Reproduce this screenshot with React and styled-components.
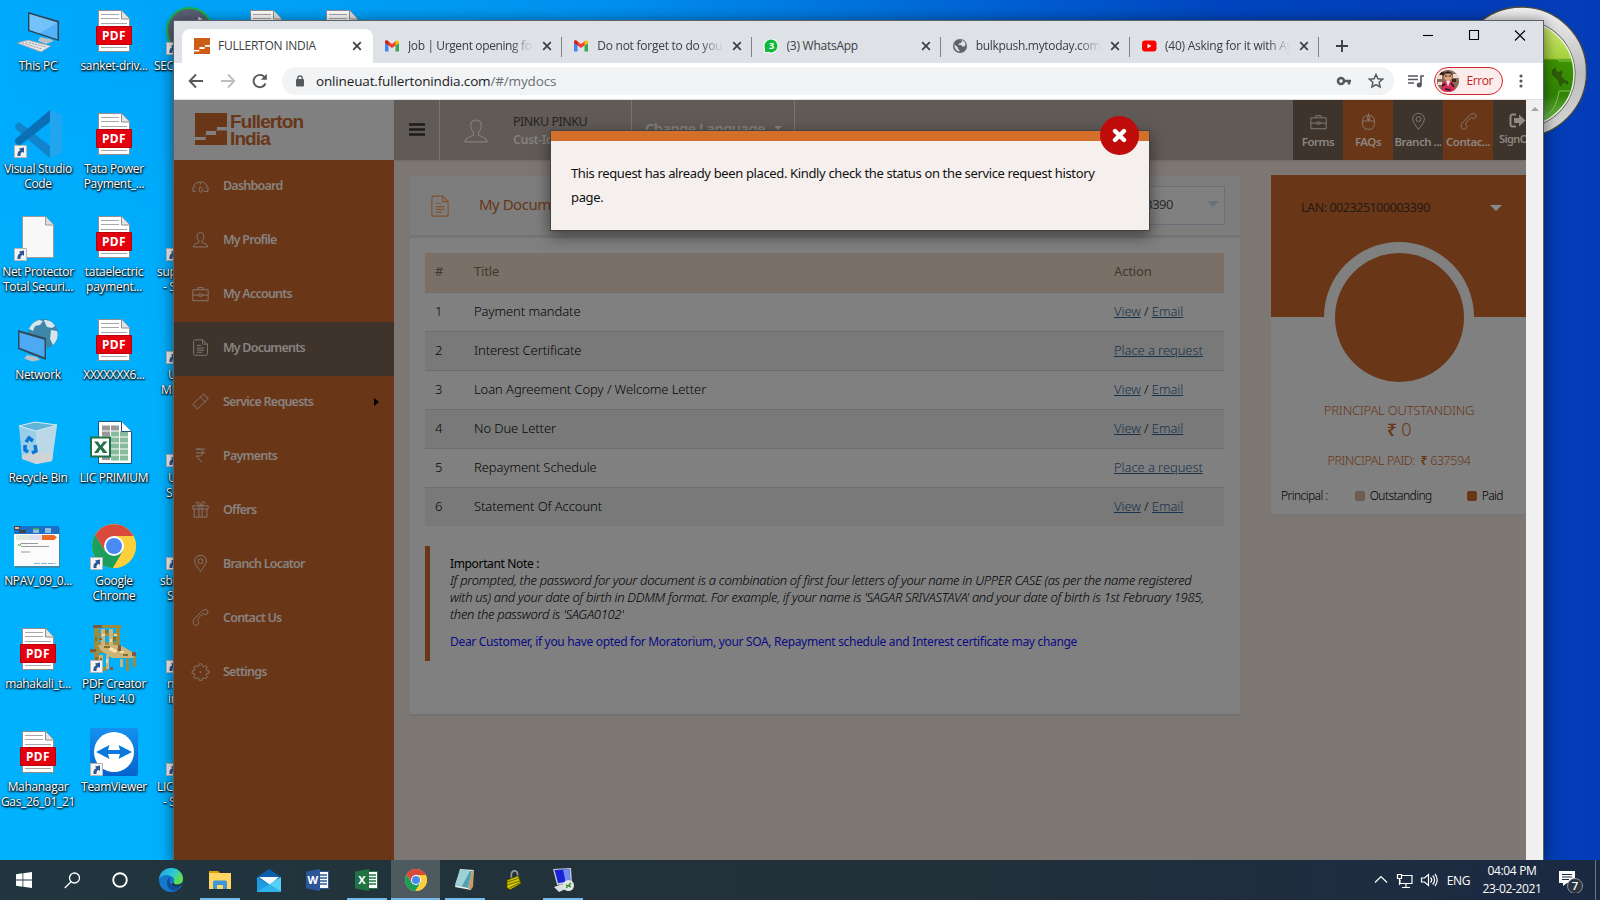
import React from "react";
import styled, { createGlobalStyle, css } from "styled-components";

const GlobalStyle = createGlobalStyle`
  * { box-sizing: border-box; }
  html, body { margin: 0; padding: 0; overflow: hidden; }
  body { font-family: "Open Sans", "Noto Sans", sans-serif; font-size: 12px; color: #000; }
`;

const ui = `"Open Sans", "Noto Sans", sans-serif`;
const site = `"Noto Sans", "Open Sans", sans-serif`;

/* ---------- desktop ---------- */
const Desktop = styled.div`
  position: relative;
  display: flex;
  flex-direction: column;
  width: 1600px;
  height: 900px;
  overflow: hidden;
  background: linear-gradient(90deg, #00a9fc 0%, #00a2f8 18%, #0092ef 37%, #007ae0 50%, #0062d3 62%, #0046c0 76%, #033fba 88%, #033cb6 100%);
`;
const DesktopArea = styled.div`
  flex: 1;
  display: grid;
  grid-template-columns: repeat(5, 76px);
  grid-template-rows: repeat(8, 103px);
  grid-auto-flow: column;
  padding-top: 7px;
  background: linear-gradient(180deg, transparent 0, rgba(0, 182, 255, 0.6) 45%, rgba(0, 182, 255, 0.7) 100%) no-repeat 0 0 / 174px 100%;
`;
const Shortcut = styled.div`
  display: flex;
  flex-direction: column;
  align-items: ${(p) => (p.$indent ? "flex-start" : "center")};
  min-width: 0;
`;
const IconBox = styled.div`
  position: relative;
  width: 48px;
  height: 48px;
  margin: 0 14px;
  svg { display: block; }
`;
const ShortcutArrow = styled.svg`
  position: absolute;
  left: 0;
  bottom: 0;
`;
const Label = styled.div`
  width: 76px;
  margin-top: 3px;
  font: 12px/15px ${ui};
  letter-spacing: -0.32px;
  color: #fff;
  text-align: ${(p) => (p.$left ? "left" : "center")};
  white-space: pre;
  text-shadow: 0 1px 2px #000, 1px 1px 2px rgba(0, 0, 0, 0.9), 0 0 2px rgba(0, 0, 0, 0.5);
`;
const LabelLine = styled.div`
  padding-left: ${(p) => p.$pad || 0}px;
`;
const Gadget = styled.svg`
  position: absolute;
  left: 1454px;
  top: 5px;
`;

/* ---------- browser window ---------- */
const Window = styled.div`
  position: absolute;
  left: 173px;
  top: 20px;
  width: 1371px;
  height: 841px;
  display: flex;
  flex-direction: column;
  border: 1px solid #5b6168;
  border-bottom: 0;
  background: #fff;
  box-shadow: 0 2px 14px rgba(0, 0, 0, 0.55);
`;
const TabStrip = styled.div`
  display: flex;
  height: 42px;
  flex: none;
  padding: 8px 0 0 8px;
  background: #dee1e6;
`;
const Tab = styled.div`
  display: flex;
  align-items: center;
  width: ${(p) => (p.$active ? 191 : 189.25)}px;
  height: 34px;
  padding: 0 ${(p) => (p.$active ? 11 : 10)}px 0 ${(p) => (p.$active ? 12 : 11)}px;
  border-radius: 8px 8px 0 0;
  background: ${(p) => (p.$active ? "#fff" : "transparent")};
  position: relative;
  ${(p) =>
    !p.$active &&
    css`
      &::after {
        content: "";
        position: absolute;
        right: 0;
        top: 8px;
        width: 1px;
        height: 20px;
        background: #808489;
      }
    `}
`;
const Favicon = styled.div`
  width: 16px;
  height: 16px;
  flex: none;
  margin-right: 8px;
  svg { display: block; }
`;
const TabTitle = styled.div`
  flex: 1;
  min-width: 0;
  overflow: hidden;
  white-space: nowrap;
  font: 12px/18px ${ui};
  letter-spacing: ${(p) => p.$ls ?? -0.25}px;
  color: #3c4043;
  ${(p) => p.$fade && css`mask-image: linear-gradient(90deg, #000 82%, transparent 100%);`}
`;
const TabClose = styled.svg`
  flex: none;
  margin-left: 9px;
`;
const NewTab = styled.svg`
  margin: 10px 0 0 16px;
`;
const Caption = styled.div`
  margin-left: auto;
  margin-top: -1px;
  display: flex;
  gap: 30px;
  padding-right: 16px;
`;
const Toolbar = styled.div`
  display: flex;
  align-items: center;
  height: 37px;
  flex: none;
  padding: 0 14px 0 13px;
  border-bottom: 1px solid #dcdee0;
`;
const NavIcon = styled.svg`
  flex: none;
  margin-right: 14px;
`;
const Omnibox = styled.div`
  display: flex;
  align-items: center;
  width: 1112px;
  height: 28px;
  margin-left: -1px;
  padding: 0 10px 0 14px;
  border-radius: 14px;
  background: #f1f3f4;
  font: 13.5px/20px ${ui};
  letter-spacing: -0.15px;
  color: #202124;
  span { color: #6b6f73; }
  svg { flex: none; }
`;
const Url = styled.div`
  margin-left: 12px;
  flex: 1;
`;
const OmniActions = styled.div`
  display: flex;
  gap: 16px;
  align-items: center;
`;
const MediaIcon = styled.svg`
  flex: none;
  margin-left: 13px;
`;
const ProfileChip = styled.div`
  display: flex;
  align-items: center;
  width: 69px;
  height: 28px;
  margin: 0 16px 0 9px;
  padding-left: 2px;
  border: 1px solid #d2262a;
  border-radius: 14px;
  background: #fceceb;
  color: #c5221f;
  font: 12px/16px ${ui};
  letter-spacing: -0.4px;
  svg { margin-right: 7.5px; flex: none; }
`;

/* ---------- web page ---------- */
const Page = styled.div`
  flex: 1;
  display: flex;
  min-height: 0;
  font-family: ${site};
`;
const Scrollbar = styled.div`
  width: 17px;
  background: #f0f0f0;
  display: flex;
  justify-content: center;
  padding-top: 7px;
`;
const ScrollUp = styled.i`
  width: 0;
  height: 0;
  border: 4px solid transparent;
  border-bottom-color: #a3a3a3;
  border-top: 0;
`;
const Sidebar = styled.div`
  width: 220px;
  flex: none;
  background: #693617;
`;
const Brand = styled.div`
  display: flex;
  align-items: center;
  height: 60px;
  padding: 0 0 3px 21px;
  background: #808080;
  color: #693617;
`;
const BrandName = styled.div`
  margin: 3px 0 0 3px;
  font: bold 19px/17.5px "Liberation Sans", sans-serif;
  letter-spacing: -0.9px;
`;
const MenuItem = styled.div`
  display: flex;
  align-items: center;
  height: 54px;
  padding-left: 18px;
  background: ${(p) => (p.$active ? "#3e342b" : "transparent")};
  color: #888380;
  font: 600 12.5px/20px ${site};
  letter-spacing: -0.78px;
  svg { margin: -3px 14px 0 0; color: #837a74; }
  span { flex: 1; padding-bottom: 2px; }
`;
const SubArrow = styled.i`
  width: 0;
  height: 0;
  margin: -3px 15px 0 0;
  border: 4px solid transparent;
  border-left: 5px solid #000;
  border-right: 0;
`;
const Main = styled.div`
  width: 1132px;
  flex: none;
  overflow: hidden;
  background: #7d7773;
`;
const TopBar = styled.div`
  display: flex;
  height: 60px;
  background: #605b56;
  box-shadow: 0 1px 2px rgba(0, 0, 0, 0.12);
`;
const TopCell = styled.div`
  display: flex;
  align-items: center;
  width: ${(p) => p.$w}px;
  flex: none;
  padding-left: ${(p) => p.$pad}px;
  border-right: 1px solid #7b7672;
`;
const UserName = styled.div`
  margin: 1px 0 0 24px;
  font: 12.5px/18px ${site};
  letter-spacing: -0.5px;
  color: #262322;
  white-space: nowrap;
  b { display: block; font-size: 12.5px; font-weight: 600; color: #85807d; }
`;
const Language = styled.div`
  display: flex;
  align-items: center;
  gap: 9px;
  padding-bottom: 5px;
  font: 600 14.5px/20px ${site};
  letter-spacing: -0.5px;
  color: #85807d;
  white-space: nowrap;
`;
const QuickLinks = styled.div`
  display: flex;
  margin-left: auto;
  width: 233px;
  overflow: hidden;
`;
const QuickLink = styled.div`
  flex: none;
  width: 50px;
  height: 60px;
  padding: ${(p) => (p.$lift ? 12 : 13)}px 0 0 ${(p) => (p.$lift ? 6 : 0)}px;
  background: ${(p) => (p.$orange ? "#693617" : "#3e342b")};
  color: #8b8683;
  text-align: ${(p) => (p.$lift ? "left" : "center")};
  font: 600 ${(p) => (p.$lift ? 11 : 11.5)}px/14px ${site};
  letter-spacing: ${(p) => (p.$lift ? -0.6 : -0.5)}px;
  white-space: nowrap;
  svg { display: block; margin: 0 auto 5px; color: #857c76; ${(p) => p.$lift && css`margin: 1px 0 4px 10px; color: #8e8b88;`} }
`;
const Content = styled.div`
  display: flex;
  align-items: flex-start;
  padding: 15px 0 0 15px;
`;
const Card = styled.div`
  width: 832px;
  height: 541px;
  flex: none;
  border: 1px solid #787878;
  border-bottom: 2px solid #75716f;
  background: #808080;
`;
const CardHead = styled.div`
  display: flex;
  align-items: center;
  height: 62px;
  padding: 0 15px 1px 20px;
  background: #7d7d7d;
  border-bottom: 3px solid #757575;
  color: #693617;
  svg { margin-right: 29px; margin-top: 1px; }
`;
const CardTitle = styled.div`
  padding-bottom: 2px;
  font: 15px/20px ${site};
  letter-spacing: -0.5px;
`;
const AccountSelect = styled.div`
  margin-left: auto;
  display: flex;
  align-items: center;
  justify-content: flex-end;
  width: 190px;
  height: 39px;
  padding: 0 5px 2px 0;
  border: 1px solid #687079;
  background: #808080;
  color: #2d2d2d;
  font: 13px/20px ${site};
  letter-spacing: -0.5px;
  white-space: nowrap;
`;
const Caret = styled.i`
  width: 0;
  height: 0;
  margin-left: ${(p) => p.$gap || 0}px;
  border: ${(p) => p.$s || 6}px solid transparent;
  border-top-color: ${(p) => p.$c || "#6a7177"};
  border-bottom: 0;
`;
const Table = styled.div`
  margin: 15px 16px 0 15px;
`;
const Row = styled.div`
  display: grid;
  grid-template-columns: 39px 640px 1fr;
  align-items: center;
  height: ${(p) => (p.$head ? 40 : p.$last ? 38 : 39)}px;
  padding: 0 0 ${(p) => (p.$head ? 3 : 2)}px 10px;
  border-bottom: ${(p) => (p.$last ? 0 : 1)}px solid #6d6d6d;
  background: ${(p) => (p.$head ? "#7a7068" : p.$odd ? "#797979" : "transparent")};
  color: ${(p) => (p.$head ? "#42382e" : "#050505")};
  font: ${(p) => (p.$head ? 400 : 300)} 13px/20px ${site};
  letter-spacing: ${(p) => (p.$head ? -0.15 : -0.08)}px;
`;
const Link = styled.a`
  color: #18334c;
  text-decoration: underline;
`;
const Note = styled.div`
  height: 115px;
  margin: 20px 15px 0;
  padding: 9px 0 0 20px;
  border-left: 5px solid #693617;
  font: 400 12px/17px ${site};
  letter-spacing: -0.35px;
  color: #000;
  white-space: nowrap;
  em { display: block; font-size: 13px; font-weight: 300; letter-spacing: -0.31px; }
  p { margin: 10px 0 0; color: #0b0b85; letter-spacing: -0.32px; }
`;
const Summary = styled.div`
  width: 256px;
  height: 340px;
  margin-left: 30px;
  background: #808080;
  border-bottom: 1px solid #757170;
  color: #693617;
  text-align: center;
  font-family: ${site};
`;
const SummaryTop = styled.div`
  display: flex;
  flex-direction: column;
  height: 142px;
  background: #693617;
`;
const Lan = styled.div`
  display: flex;
  align-items: center;
  padding: 23px 24px 0 30px;
  justify-content: space-between;
  color: #241a14;
  font: 12.5px/20px ${site};
  letter-spacing: -0.45px;
`;
const Gauge = styled.div`
  flex: none;
  width: 150px;
  height: 75px;
  margin: 24px auto 0 53px;
  padding: 10.5px;
  border-radius: 75px 75px 0 0;
  background: #808080;
`;
const GaugeDisc = styled.div`
  width: 129px;
  height: 129px;
  border-radius: 50%;
  background: #693617;
`;
const Amount = styled.div`
  margin-top: ${(p) => p.$top || 0}px;
  padding-left: 1px;
  font: 300 ${(p) => p.$size}px/20px ${site};
  letter-spacing: ${(p) => p.$ls}px;
  b { font-weight: 600; }
`;
const Legend = styled.div`
  display: flex;
  align-items: center;
  margin-top: 15px;
  padding-left: 10px;
  color: #000;
  font: 300 12px/20px ${site};
  letter-spacing: -0.55px;
`;
const Swatch = styled.i`
  width: 10px;
  height: 10px;
  margin: 0 5px 0 ${(p) => p.$gap}px;
  border-radius: 2px;
  background: ${(p) => p.$c};
`;

/* ---------- dialog ---------- */
const Dialog = styled.div`
  position: absolute;
  left: 376px;
  top: 109px;
  width: 600px;
  height: 101px;
  padding: 30px 0 0 20px;
  border: 1px solid #454443;
  background: linear-gradient(#d36e2b 10px, #f5f0ed 10px);
  box-shadow: 0 5px 14px rgba(0, 0, 0, 0.5);
  font: 13px/24px ${site};
  letter-spacing: -0.36px;
  color: #111;
`;
const DialogClose = styled.div`
  position: absolute;
  right: 10.5px;
  top: -15px;
  width: 39px;
  height: 39px;
  display: grid;
  place-items: center;
  border-radius: 50%;
  background: #c00b0b;
`;

/* ---------- taskbar ---------- */
const Taskbar = styled.div`
  position: relative;
  z-index: 2;
  display: flex;
  height: 40px;
  flex: none;
  background: linear-gradient(90deg, #213640 0%, #22323a 30%, #22303a 60%, #1d2c40 88%, #1a2942 100%);
  color: #fff;
  font: 12px/19px ${ui};
`;
const TaskButton = styled.div`
  display: grid;
  place-items: center;
  width: ${(p) => p.$w || 49}px;
  margin-left: ${(p) => p.$gap || 0}px;
  background: ${(p) => (p.$active ? "#4d5a60" : "transparent")};
  ${(p) => p.$open && css`background-image: linear-gradient(#76b9ed, #76b9ed); background-size: ${p.$active ? 49 : 40}px 2px; background-repeat: no-repeat; background-position: center bottom;`}
`;
const Tray = styled.div`
  display: flex;
  align-items: center;
  margin-left: auto;
  padding-right: 10px;
`;
const Lang = styled.span`
  margin-left: 9px;
  letter-spacing: -0.4px;
`;
const Clock = styled.div`
  width: 62px;
  margin: 0 16px 0 11px;
  text-align: center;
  letter-spacing: -0.35px;
  line-height: 18px;
  white-space: nowrap;
`;
const ShowDesktop = styled.div`
  width: 5px;
  border-left: 1px solid #6d7784;
`;

/* ---------- drawings ---------- */
const Arrow = () => (
  <ShortcutArrow width="13" height="13" viewBox="0 0 13 13">
    <path d="M.5.5h12v12H.5z" fill="#f4f4f4" stroke="#b5b5b5" />
    <path d="M3.500 11c-.3-3 .6-5 2.800-5.800L5 3.500 10 2.500V8L8.600 6.800C7 7.500 6.300 9 6.500 11z" fill="#2b5797" />
  </ShortcutArrow>
);
const Pdf = () => (
  <svg width="48" height="48" viewBox="0 0 48 48">
    <path d="M8.500 3.500h23l8 8v33h-31z" fill="#fff" stroke="#8f8f8f" />
    <path d="M31.500 3.500v8.500h8" fill="#e4e4e4" stroke="#8f8f8f" />
    <path d="M11 7.500h18M11 11.500h18M11 16.500h26M11 40.500h26" stroke="#a8a8a8" />
    <path d="M6.500 19.500h35v18h-35z" fill="#e3000f" stroke="#b8000c" />
    <text x="24" y="33" fill="#fff" fontFamily="Noto Sans" fontWeight="700" fontSize="12" textAnchor="middle" letterSpacing="0.4">PDF</text>
  </svg>
);
const Pc = () => (
  <svg width="48" height="48" viewBox="0 0 48 48">
    <path d="M14 5l31 9v20L14 24z" fill="#2f4252" />
    <path d="M15.500 7l28 8.500v16.800L15.500 23z" fill="#54b3f8" />
    <path d="M15.500 7l28 8.500-18 10.700-10-3.200z" fill="#8accfb" opacity=".6" />
    <path d="M26 30l10 2 4 2-8 3-8-3z" fill="#b9c0c6" />
    <path d="M3 36l11-3 23 6-10 6z" fill="#e3e5e7" stroke="#8d9399" strokeWidth=".7" />
    <path d="M8 36l20 6M12 35l20 5" stroke="#989ea4" strokeDasharray="2 1" />
  </svg>
);
const VsCode = () => (
  <svg width="48" height="48" viewBox="0 0 48 48">
    <path d="M5 12L1 15.500v3L36 48V36z" fill="#1284cc" />
    <path d="M5 36L1 32.500v-3L36 0v12z" fill="#0a6fb5" />
    <path d="M36 0l12 5.500v37L36 48z" fill="#23a4ef" />
  </svg>
);
const Blank = () => (
  <svg width="48" height="48" viewBox="0 0 48 48">
    <path d="M8.500 3.500h23l8 8v33h-31z" fill="#f8f8f8" stroke="#9a9a9a" />
    <path d="M31.500 3.500v8.500h8" fill="#ddd" stroke="#9a9a9a" />
  </svg>
);
const Net = () => (
  <svg width="48" height="48" viewBox="0 0 48 48">
    <circle cx="29" cy="18" r="15" fill="#3d86a8" />
    <path d="M15 13c2-5 6-8 10-9l4 1-3 4-5 1-2 5zM30 4c5 0 9 2 11 6l-3 2-5-1-2-4zM37 14l6 1c2 6-1 11-4 14l-3-6z" fill="#d4e6ec" />
    <path d="M4 14l28 8v22L4 33z" fill="#33485a" />
    <path d="M5.500 16.500l25 7.200v17.500l-25-9.500z" fill="#4ca9f2" />
    <path d="M13 39l10 2 3 3-8 1.500-8-3z" fill="#b9c0c6" />
  </svg>
);
const Bin = () => (
  <svg width="48" height="48" viewBox="0 0 48 48">
    <path d="M5 7l17 4 21-5-5 36-16 3-14-5z" fill="#a9d2e6" opacity=".9" />
    <path d="M5 7l16-4 22 3-21 6z" fill="#5fb6da" stroke="#dcebf2" />
    <path d="M22 12v33l16-3 5-36z" fill="#c3dbe6" opacity=".8" />
    <path d="M8 36l14-3 17 2-1 7-16 3-14-5z" fill="#d7d3cf" opacity=".8" />
    <g fill="none" stroke="#0b74d4" strokeWidth="3.500"><path d="M12 23l3-4 4 3" /><path d="M21 26l1 6-4 2" /><path d="M14 33l-3-2v-5" /></g>
  </svg>
);
const ExcelFile = () => (
  <svg width="48" height="48" viewBox="0 0 48 48">
    <path d="M8.500 2.500h23l10 10v32h-33z" fill="#fff" stroke="#19557c" />
    <path d="M12 9h18M12 15h8" stroke="#999" strokeWidth="5" strokeDasharray="8 1" />
    <path d="M21 15h17M21 21h18M21 27h18M21 33h18M21 39h18" stroke="#86bb9b" strokeWidth="5" strokeDasharray="8 1" />
    <path d="M31.500 2.500v10h10" fill="#fff" stroke="#19557c" />
    <path d="M12 39h8" stroke="#999" strokeWidth="4" />
    <path d="M1 18.500h19v19H1z" fill="#fff" stroke="#1e7145" strokeWidth="2" />
    <path d="M4 22.500h4l2.500 4 3-4h4l-5 5.500 5 6h-4.500L10.500 30 8 34H4l4.500-6z" fill="#1e7145" />
  </svg>
);
const Chrome = ({ s = 44 }) => (
  <svg width={s} height={s} viewBox="0 0 44 44">
    <circle cx="22" cy="22" r="22" fill="#fdd03b" />
    <path d="M22 12h19.500A22 22 0 0 0 3 11l10 16z" fill="#d94a3d" />
    <path d="M3 11a22 22 0 0 0 18 33l10-17H13z" fill="#1aa05c" />
    <path d="M31 27L21 44a22 22 0 0 0 20.500-32H22z" fill="#fdd03b" />
    <circle cx="22" cy="22" r="10" fill="#fff" />
    <circle cx="22" cy="22" r="8" fill="#4a8af4" />
  </svg>
);
const Thumb = () => (
  <svg width="48" height="48" viewBox="0 0 48 48">
    <path d="M1 6h45v40H1z" fill="#666" opacity=".5" />
    <path d="M0 4h45v40H0z" fill="#fbfbfb" />
    <path d="M0 4h45v8H0z" fill="#1b6fc4" />
    <path d="M0 4h6v4H0zM5 8h7v3H5z" fill="#3d444c" /><path d="M1 5h4v2H1z" fill="#e7b69b" />
    <path d="M19 6h6v5h-6zM31 6h6v5h-6z" fill="#8fbadb" /><path d="M19 6h6v1.500h-6z" fill="#3aa35c" />
    <path d="M2 13h14l2 2.500-2 2.500H2z" fill="#dfe9dc" /><path d="M16 13h12v5H16z" fill="#e0dded" />
    <path d="M28 13h12l3 2.500-3 2.500H28z" fill="#ee6a26" />
    <path d="M4 22l1.500 2L7 21.500" stroke="#4caf3c" fill="none" />
    <path d="M7 21.500h17M7 24.500h28M7 30h9" stroke="#999" /><path d="M20 41.500h22" stroke="#86b3dc" strokeDasharray="6 1" />
  </svg>
);
const Chair = () => (
  <svg width="48" height="48" viewBox="0 0 48 48">
    <g fill="#9d8c3e"><path d="M3 0h28v3H3zM4 3h5v43H4zM26 3h4v20h-4zM8 8h19v3H8zM8 17h19v3H8zM0 24h20v4H0zM12 42h5v4h-5zM36 32h3v14h-3zM43 30h3v12h-3z" /></g>
    <g fill="#cdb377"><path d="M11 4h4v16h-4zM19 4h4v18h-4zM8 20h22l16 9-3 4H22l-12-8zM9 30h4v14H9zM16 30h3v14h-3zM30 34h3v8h-3z" /></g>
    <path d="M9 13h3v2H9zM15 5h3v3h-3zM23 12h3v4h-3zM14 21h6v2h-6zM24 24h5v2h-5zM33 29h5v2h-5zM10 33h2v5h-2zM5 12h2v4H5zM5 32h3v4H5z" fill="#80702c" />
    <path d="M12 9h3v2h-3zM20 14h2v3h-2zM24 9h3v2h-3zM30 26h4v2h-4zM16 34h2v4h-2z" fill="#f0d9a8" />
    <path d="M3 0h9v3H3zM0 24h6v3H0zM42 27h4v4h-4zM28 20h3v6h-3zM20 42h3v3h-3z" fill="#7c5a4a" />
    <path d="M20 22l8 3-3 3-6-3z" fill="#ffe0a8" />
  </svg>
);
const Team = () => (
  <svg width="48" height="48" viewBox="0 0 48 48">
    <defs><linearGradient id="tv" x1="0" y1="0" x2="0" y2="1"><stop offset="0" stopColor="#1690f0" /><stop offset="1" stopColor="#0562cc" /></linearGradient></defs>
    <rect width="48" height="48" rx="2" fill="url(#tv)" />
    <circle cx="24" cy="24" r="20" fill="#fff" />
    <path d="M6 24l13.500-7-1.500 5h12l-1.500-5L42 24l-13.500 7 1.500-5H18l1.500 5z" fill="#0a78dc" />
  </svg>
);
const DarkDisc = () => (
  <svg width="48" height="48" viewBox="0 0 48 48">
    <circle cx="23.500" cy="23.500" r="22.500" fill="#5a5f73" stroke="#16b548" strokeWidth="2" />
    <path d="M33 12h3M33 10v4" stroke="#fff" />
  </svg>
);

const BrandMark = ({ s = 32, bg = "#808080", c = "#693617" }) => (
  <svg width={s} height={s} viewBox="0 0 32 32">
    <path d="M0 0h32v32H0z" fill={c} />
    <path d="M0 24h11v-6h11v-4h10v3.500H21V22H10.500v5H0z" fill={bg} />
  </svg>
);
const Gmail = () => (
  <svg width="16" height="16" viewBox="0 0 16 16">
    <path d="M1 13.500V5l3.500 2.500v6z" fill="#4285f4" /><path d="M11.500 13.500v-6L15 5v8.500z" fill="#34a853" />
    <path d="M1 5V3.700C1 2.300 2.700 2 3.600 2.700L8 6l4.400-3.300L13 6.400 8 10 1 5z" fill="#ea4335" />
    <path d="M11.500 7.500V3.300C13 1.900 15 2.400 15 4v1z" fill="#fbbc04" /><path d="M1 5V4c0-1.600 2-2.100 3.500-.7v4.200z" fill="#c5221f" />
  </svg>
);
const WhatsApp = () => (
  <svg width="16" height="16" viewBox="0 0 16 16">
    <path d="M.5 15.500L1 11A7.500 7.500 0 1 1 5 15z" fill="#fff" /><path d="M1.800 14.200l.4-3.400a6.500 6.500 0 1 1 3.100 3z" fill="#12b83d" />
    <text x="8.500" y="11.200" fontSize="9" fontWeight="700" fill="#fff" textAnchor="middle" fontFamily="Open Sans">3</text>
  </svg>
);
const Globe = () => (
  <svg width="16" height="16" viewBox="0 0 16 16">
    <circle cx="8" cy="8" r="7" fill="#5f6368" />
    <path d="M2.500 6.500l3.500 3v1.500l1.500 1v1.500C4.500 13.300 2 10 2.500 6.500zM7 2.500h3c0 2-1 2.500-2.500 2.500L6.500 7H9l1.500 1.500h2c.6-.8 1.100-1.500 1-3-.6-1.500-2-2.700-3.500-3.300z" fill="#dee1e6" />
  </svg>
);
const Tube = () => (
  <svg width="16" height="16" viewBox="0 0 16 16"><rect x="1" y="2.500" width="14.500" height="11" rx="3" fill="#f00" /><path d="M6.500 5.700v4.600l4-2.300z" fill="#fff" /></svg>
);
const CloseX = () => (
  <TabClose width="10" height="10" viewBox="0 0 10 10"><path d="M1.200 1.200l7.600 7.600M8.800 1.200L1.200 8.800" stroke="#3c4043" strokeWidth="1.700" /></TabClose>
);

const lineIcons = {
  dash: <><path d="M3.500 13.500H1a7.200 7.200 0 1 1 14 0h-4M3 9.500l1 .7M8 5.500V7M13 9.500l-1 .7" /><path d="M7.500 9c1.500 1 3 2.500 2 4.500-.8 1.300-2.800.8-2.800-1 0-.8.500-1.500.8-3.500z" /></>,
  user: <path d="M8 1.500C5.500 1.500 4.600 3.300 4.800 5.500c.1 1.800 1 3 1.700 3.700v1.600c-1 .9-5 .9-5.300 4.200h13.600c-.3-3.300-4.300-3.300-5.300-4.200V9.200c.7-.7 1.600-1.900 1.700-3.700.2-2.200-.7-4-3.200-4z" />,
  bag: <><path d="M.8 4.500h14.400v10.300H.8zM5.500 4.500v-2h5v2M.8 9.500h5.700M9.500 9.500h5.700" /><path d="M6.500 8.500h3v2h-3z" /></>,
  doc: <><path d="M1.500 2.500c0-1 .5-1.700 1.500-1.700h7l4.500 4v9c0 1-.5 1.500-1.500 1.500H3c-1 0-1.500-.5-1.500-1.500zM10 .8v4h4.500" /><path d="M4.500 6h4M4.500 8.500h7M4.500 10.500h7M4.500 12.500h5" /></>,
  ticket: <path d="M11 .8l1.300 1.300c-.5 1.200.6 2.300 1.800 1.800L15.400 5.200 5 15.200l-1.400-1.300c.5-1.200-.6-2.300-1.800-1.800L.6 10.800zM8 4l4.200 4.200" />,
  rupee: <path d="M3.500 2h9M3.500 5.500h9M4 2h3c4 0 4 6.500 0 6.500H4l5.500 6" />,
  gift: <><path d="M.8 4.500h14.400v3H.8zM2 7.500v7.700h12V7.500M6.500 4.500v10.700M9.500 4.500v10.700" /><path d="M8 4.500C5 4 3 1 5 .8s3 2.700 3 3.700c0-1 1-4 3-3.700s0 3.200-3 3.700z" /></>,
  pin: <><path d="M8 15.500C5 11 2.500 8.500 2.500 5.500a5.500 5.200 0 0 1 11 0c0 3-2.500 5.500-5.500 10z" /><circle cx="8" cy="5.800" r="2.300" /></>,
  phone: <path d="M8.300 3C9.500 1 13.500-.2 14.700 1.500c1 1.500-.2 3.700-1.700 3.800-1.300.1-1.600-1.300-2.700-.8C8.500 5.800 6.200 8.300 5.300 10.300c-.3 1.200 1.300 1 1.200 2.400-.1 1.600-2 3-3.600 2.500C.5 14.200.8 11.500 2 9.500z" />,
  gear: <><path d="M6.800.8h2.400l.4 1.900 1.500.7 1.700-1.100 1.600 1.600-1.100 1.700.6 1.500 2 .4v2.200l-2 .4-.6 1.500 1.100 1.700-1.600 1.600-1.700-1.100-1.500.7-.4 1.900H6.800l-.4-1.900-1.500-.7-1.700 1.100-1.600-1.600 1.100-1.700-.6-1.500-2-.4V7.500l2-.4.6-1.500L1.600 3.900l1.600-1.600 1.700 1.100 1.500-.7z" /><circle cx="8" cy="8.500" r=".5" /></>,
  mouse: <><rect x="2.500" y="2.300" width="11" height="13" rx="4.500" /><path d="M2.500 7.500h11M8 2.300V.3M8 7.500V5M6.800 3.500h2.400V6H6.800z" /></>,
};
const LineIcon = ({ name, s = 17, w = 0.9 }) => (
  <svg width={s} height={s} viewBox="0 0 16 16" overflow="visible" fill="none" stroke="currentColor" strokeWidth={w}>{lineIcons[name]}</svg>
);

/* ---------- data ---------- */
const shortcuts = [
  { icon: <Pc />, lines: ["This PC"] },
  { icon: <VsCode />, arrow: true, lines: ["Visual Studio", "Code"] },
  { icon: <Blank />, arrow: true, lines: ["Net Protector", "Total Securi..."] },
  { icon: <Net />, lines: ["Network"] },
  { icon: <Bin />, lines: ["Recycle Bin"] },
  { icon: <Thumb />, lines: ["NPAV_09_0..."] },
  { icon: <Pdf />, lines: ["mahakali_t..."] },
  { icon: <Pdf />, lines: ["Mahanagar", "Gas_26_01_21"] },
  { icon: <Pdf />, lines: ["sanket-driv..."] },
  { icon: <Pdf />, lines: ["Tata Power", "Payment_..."] },
  { icon: <Pdf />, lines: ["tataelectric", "payment..."] },
  { icon: <Pdf />, lines: ["XXXXXXX6..."] },
  { icon: <ExcelFile />, lines: ["LIC PRIMIUM"] },
  { icon: <Chrome />, arrow: true, inset: true, lines: ["Google", "Chrome"] },
  { icon: <Chair />, arrow: true, lines: ["PDF Creator", "Plus 4.0"] },
  { icon: <Team />, arrow: true, lines: ["TeamViewer"] },
  { icon: <DarkDisc />, arrow: true, lines: ["SEC"], pads: [2] },
  { lines: [] },
  { arrow: true, lines: ["sup", "- S"], pads: [5, 11] },
  { arrow: true, lines: ["U", "MI"], pads: [16, 9] },
  { arrow: true, lines: ["U", "S"], pads: [16, 14] },
  { arrow: true, lines: ["sbi", "S"], pads: [8, 15] },
  { arrow: true, lines: ["n", "in"], pads: [15, 16] },
  { arrow: true, lines: ["LIC", "- S"], pads: [5, 11] },
  { icon: <Pdf />, lines: [] },
  ...Array.from({ length: 7 }, () => ({ lines: [] })),
  { icon: <Pdf />, lines: [] },
];
const tabs = [
  { icon: <Gmail />, title: "Job | Urgent opening for", fade: true, ls: -0.38 },
  { icon: <Gmail />, title: "Do not forget to do your", fade: true },
  { icon: <WhatsApp />, title: "(3) WhatsApp" },
  { icon: <Globe />, title: "bulkpush.mytoday.com/b", fade: true, ls: -0.32 },
  { icon: <Tube />, title: "(40) Asking for it with Ay", fade: true },
];
const menu = [
  ["dash", "Dashboard"], ["user", "My Profile"], ["bag", "My Accounts"], ["doc", "My Documents"],
  ["ticket", "Service Requests"], ["rupee", "Payments"], ["gift", "Offers"], ["pin", "Branch Locator"],
  ["phone", "Contact Us"], ["gear", "Settings"],
];
const documents = [
  ["Payment mandate", true], ["Interest Certificate", false], ["Loan Agreement Copy / Welcome Letter", true],
  ["No Due Letter", true], ["Repayment Schedule", false], ["Statement Of Account", true],
];

function BrowserChrome() {
  return (
    <>
      <TabStrip>
        <Tab $active>
          <Favicon><BrandMark s={16} bg="#fff" c="#cd5c17" /></Favicon>
          <TabTitle>FULLERTON INDIA</TabTitle>
          <CloseX />
        </Tab>
        {tabs.map((t) => (
          <Tab key={t.title}>
            <Favicon>{t.icon}</Favicon>
            <TabTitle $fade={t.fade} $ls={t.ls}>{t.title}</TabTitle>
            <CloseX />
          </Tab>
        ))}
        <NewTab width="14" height="14" viewBox="0 0 14 14"><path d="M7 1v12M1 7h12" stroke="#3c4043" strokeWidth="1.900" /></NewTab>
        <Caption>
          {["M4 7.500h10", "M4.500 2.500h9v9h-9z", "M4 2.500l10 10M14 2.500l-10 10"].map((d) => (
            <svg key={d} width="16" height="16" viewBox="0 0 16 16" fill="none" stroke="#000" strokeWidth="1.100"><path d={d} /></svg>
          ))}
        </Caption>
      </TabStrip>
      <Toolbar>
        <NavIcon width="18" height="18" viewBox="0 0 18 18" fill="none" stroke="#55595e" strokeWidth="1.900"><path d="M16 9H3M9 2.500L2.700 9 9 15.500" /></NavIcon>
        <NavIcon width="18" height="18" viewBox="0 0 18 18" fill="none" stroke="#bcbec0" strokeWidth="1.900"><path d="M2 9h13M9 2.500L15.300 9 9 15.500" /></NavIcon>
        <NavIcon width="18" height="18" viewBox="0 0 18 18" fill="none" stroke="#55595e" strokeWidth="1.900"><path d="M14.500 11.500A6.200 6.200 0 1 1 13.500 5" /><path d="M15.800 1.800v6H9.800z" fill="#55595e" stroke="none" /></NavIcon>
        <Omnibox>
          <svg width="8" height="12" viewBox="0 0 8 12"><rect y="4" width="8" height="7.500" rx="1" fill="#55595e" /><path d="M1.800 4.500V3a2.200 2.200 0 0 1 4.400 0v1.500" fill="none" stroke="#55595e" strokeWidth="1.300" /></svg>
          <Url>onlineuat.fullertonindia.com<span>/#/mydocs</span></Url>
          <OmniActions>
            <svg width="16" height="16" viewBox="0 0 16 16"><circle cx="5" cy="8" r="3" fill="none" stroke="#55595e" strokeWidth="2.600" /><path d="M8 8h7M13 8v3.500" stroke="#55595e" strokeWidth="2.600" /></svg>
            <svg width="16" height="16" viewBox="0 0 16 16" fill="none" stroke="#55595e" strokeWidth="1.500"><path d="M8 1.500l1.900 4.300 4.700.4-3.500 3.100 1 4.600L8 11.500l-4.100 2.400 1-4.600L1.400 6.200l4.700-.4z" /></svg>
          </OmniActions>
        </Omnibox>
        <MediaIcon width="18" height="16" viewBox="0 0 18 16"><path d="M1 3h10M1 6.500h10M1 10h6" stroke="#55595e" strokeWidth="1.600" /><path d="M14 12V3h3" fill="none" stroke="#55595e" strokeWidth="1.700" /><circle cx="12.200" cy="12" r="2.500" fill="#55595e" /></MediaIcon>
        <ProfileChip>
          <svg width="22" height="22" viewBox="0 0 22 22">
            <clipPath id="av"><circle cx="11" cy="11" r="11" /></clipPath>
            <g clipPath="url(#av)"><path d="M0 0h22v22H0z" fill="#8a6a58" /><path d="M0 5h5v4H0zM16 4h6v4h-6zM1 12h4v3H1z" fill="#ecdccf" /><path d="M3 2h4v3H3zM15 9h4v3h-4z" fill="#3b2620" /><circle cx="11" cy="6.500" r="4" fill="#dfa37c" /><path d="M6.500 6c0-6 9-6 9 0l-2-2.500h-5z" fill="#1f1816" /><path d="M4 22l1-8 4-3.500h4.500L17 14l2 8z" fill="#d92b55" /><path d="M9 10.500l2 6 2.500-6z" fill="#f3e9e4" /><path d="M5 16l3-2M14 13l3 4M8 19l6 1" stroke="#2b1c28" strokeWidth="1.600" /><path d="M8 6h2.300M11.700 6H14" stroke="#2a1a16" /></g>
          </svg>
          Error
        </ProfileChip>
        <svg width="4" height="16" viewBox="0 0 4 16" fill="#55595e"><circle cx="2" cy="3" r="1.600" /><circle cx="2" cy="8" r="1.600" /><circle cx="2" cy="13" r="1.600" /></svg>
      </Toolbar>
    </>
  );
}

function SiteHeader() {
  return (
    <TopBar>
      <TopCell $w={46} $pad={15}>
        <svg width="16" height="14" viewBox="0 0 16 14"><path d="M0 1.500h16M0 6.500h16M0 11.500h16" stroke="#1d1c1b" strokeWidth="2.600" /></svg>
      </TopCell>
      <TopCell $w={192} $pad={23}>
        <svg width="26" height="27" viewBox="0 0 16 16" fill="none" stroke="#85807d" strokeWidth=".65">{lineIcons.user}</svg>
        <UserName>PINKU PINKU<b>Cust-Id :</b></UserName>
      </TopCell>
      <TopCell $w={163} $pad={13}>
        <Language>Change Language <Caret $s={4} $c="#85807d" /></Language>
      </TopCell>
      <QuickLinks>
        <QuickLink><LineIcon name="bag" />Forms</QuickLink>
        <QuickLink $orange><LineIcon name="mouse" />FAQs</QuickLink>
        <QuickLink><LineIcon name="pin" />Branch ...</QuickLink>
        <QuickLink $orange><LineIcon name="phone" />Contac...</QuickLink>
        <QuickLink $lift>
          <svg width="17" height="15" viewBox="0 0 17 15"><path d="M7 1.500H3.500a2 2 0 0 0-2 2v8a2 2 0 0 0 2 2H7" fill="none" stroke="currentColor" strokeWidth="2" /><path d="M5 5h5V1.500l6.500 6-6.500 6V10H5z" fill="currentColor" /></svg>
          SignOut
        </QuickLink>
      </QuickLinks>
    </TopBar>
  );
}

function Documents() {
  return (
    <Card>
      <CardHead>
        <svg width="20" height="22" viewBox="0 0 16 16" preserveAspectRatio="none" fill="none" stroke="#84502f" strokeWidth=".9">{lineIcons.doc}</svg>
        <CardTitle>My Documents</CardTitle>
        <AccountSelect>LAN: 002325100003390<Caret $gap={34} /></AccountSelect>
      </CardHead>
      <Table>
        <Row $head><span>#</span><span>Title</span><span>Action</span></Row>
        {documents.map(([title, ready], i) => (
          <Row key={title} $odd={i % 2 === 1} $last={i === 5}>
            <span>{i + 1}</span>
            <span>{title}</span>
            <span>{ready ? <><Link>View</Link> / <Link>Email</Link></> : <Link>Place a request</Link>}</span>
          </Row>
        ))}
      </Table>
      <Note>
        Important Note :
        <em>If prompted, the password for your document is a combination of first four letters of your name in UPPER CASE (as per the name registered</em>
        <em>with us) and your date of birth in DDMM format. For example, if your name is 'SAGAR SRIVASTAVA' and your date of birth is 1st February 1985,</em>
        <em>then the password is 'SAGA0102'</em>
        <p>Dear Customer, if you have opted for Moratorium, your SOA, Repayment schedule and Interest certificate may change</p>
      </Note>
    </Card>
  );
}

const taskIcons = {
  start: <svg width="16" height="16" viewBox="0 0 16 16" fill="#fff"><path d="M0 2.200l6.500-.9v6.300H0zM7.300 1.200L16 0v7.600H7.300zM0 8.400h6.500v6.300L0 13.800zM7.300 8.400H16V16l-8.700-1.200z" /></svg>,
  search: <svg width="17" height="17" viewBox="0 0 17 17" fill="none" stroke="#fff" strokeWidth="1.300"><circle cx="10.500" cy="6" r="5" /><path d="M7 9.700L.8 16" /></svg>,
  cortana: <svg width="16" height="16" viewBox="0 0 16 16" fill="none" stroke="#fff" strokeWidth="1.900"><circle cx="8" cy="8" r="6.800" /></svg>,
  edge: <svg width="24" height="24" viewBox="0 0 24 24"><defs><linearGradient id="eg" x1="0" y1="0" x2="1" y2=".5"><stop offset="0" stopColor="#1a9fe0" /><stop offset=".6" stopColor="#2fc7d2" /><stop offset="1" stopColor="#5fe04c" /></linearGradient></defs><circle cx="12" cy="12" r="12" fill="#1478cc" /><path d="M0 11C1 4 6 0 12 0c7 0 12 5 12 10.500 0 4-3 6-6 6s-4-1-3.500-2.500c1-1.500 1-3-.5-4.500C10 6 3 6 0 11z" fill="url(#eg)" /><path d="M8 15c0-4 2-6 5-6-3 1-3 5-1 7s6 2.500 10 .5c-2 5-5 6.500-9 6-3-1-5-4-5-7.500z" fill="#0f4c9c" /><path d="M15 14c-.6 2 1.500 3 4 2.600 2-.4 3.500-1.200 4.300-2.400L23 17c-3 2-9 2-10.500-1z" fill="#22323a" /></svg>,
  folder: <svg width="22" height="20" viewBox="0 0 22 20"><path d="M0 1h9l2 2h-5L0 5z" fill="#e39c0a" /><path d="M0 3h22v16H0z" fill="#ffd563" /><path d="M4 19v-7c0-1 1-1.500 2-1.500h10c1 0 2 .5 2 1.500v7h-4v-4H8v4z" fill="#3f96d8" /></svg>,
  mail: <svg width="24" height="23" viewBox="0 0 24 23"><path d="M0 8l12-8 12 8v7H0z" fill="#0a5da8" /><path d="M2 8h20l-9 8z" fill="#f5f8fa" /><path d="M0 8l24 15H0z" fill="#1b9ce2" /><path d="M24 8L12 15.500 24 23z" fill="#55d0f8" /><path d="M0 23l12-7.500L24 23z" fill="#2fb4ee" /></svg>,
  office: (c, l) => <svg width="23" height="22" viewBox="0 0 23 22"><path d="M12 2.500h10.500v17H12z" fill="#fff" stroke={c} /><path d="M14 6h7M14 9h7M14 12h7M14 15h7" stroke={c} strokeWidth="1.400" /><path d="M0 2.500L14 0v22L0 19.500z" fill={c} /><text x="6.800" y="15" fontFamily="Open Sans" fontSize="11" fontWeight="700" fill="#fff" textAnchor="middle">{l}</text></svg>,
  note: <svg width="22" height="24" viewBox="0 0 22 24"><path d="M6 1l14 1-3 20-16-3z" fill="#e9f0f2" /><path d="M6 2l12 1-4 17-13-3z" fill="#4fa0b0" /><path d="M6 2l10 1-8 15-7-1z" fill="#9fd0d8" /><path d="M20 2l-1 17-3 3-2-2 4-17z" fill="#c49b6a" /></svg>,
  lock: <svg width="16" height="22" viewBox="0 0 18 24"><path d="M6 10V6c0-5 6-6 7-1v5" fill="none" stroke="#999" strokeWidth="1.800" /><path d="M1 12l13-5 3 9-12 7-4-2z" fill="#cfc800" stroke="#3b3900" /><path d="M1 14.500L14.500 10M1.500 17.500L16 13M4 21l12-6" stroke="#5e5a00" /></svg>,
  remote: <svg width="24" height="24" viewBox="0 0 24 24"><path d="M2 1l18-1 1 15-15 2z" fill="#c8ccd4" /><path d="M3.500 2L18.500 1l1 12.500L7 15z" fill="#1a22d8" /><path d="M12 1.500l6.500-.5 1 12-5 .8z" fill="#6f8ef0" /><path d="M3 19l8-3 6 4-9 4z" fill="#dadde0" /><circle cx="17.500" cy="17.500" r="5.500" fill="#e4e6e6" /><path d="M15 20l5-5M15 17l2 1M18 18l2 1" stroke="#3a8c2c" strokeWidth="1.500" /></svg>,
};

export default function App() {
  return (
    <Desktop>
      <GlobalStyle />
      <DesktopArea>
        {shortcuts.map((s, i) => (
          <Shortcut key={i} $indent={s.pads}>
            <IconBox>
              {s.inset ? <svg width="48" height="48" viewBox="-2 -2 48 48"><Chrome /></svg> : s.icon}
              {s.arrow && <Arrow />}
            </IconBox>
            <Label $left={s.pads}>
              {s.lines.map((l, n) => <LabelLine key={n} $pad={s.pads && s.pads[n]}>{l}</LabelLine>)}
            </Label>
          </Shortcut>
        ))}
      </DesktopArea>

      <Gadget width="134" height="134" viewBox="0 0 134 134">
        <defs>
          <linearGradient id="ring" x1="0" y1="0" x2="0" y2="1"><stop offset="0" stopColor="#f2f2f2" /><stop offset=".5" stopColor="#bdbdbd" /><stop offset="1" stopColor="#d8d8d8" /></linearGradient>
          <linearGradient id="green" x1="0" y1="0" x2="0" y2="1"><stop offset="0" stopColor="#d4ec7a" /><stop offset=".35" stopColor="#a6d23c" /><stop offset=".37" stopColor="#3f9400" /><stop offset=".7" stopColor="#318508" /><stop offset="1" stopColor="#7cc860" /></linearGradient>
        </defs>
        <circle cx="67.500" cy="67" r="65" fill="url(#ring)" stroke="#4b4b3c" strokeWidth="1.300" />
        <circle cx="67.500" cy="69" r="54" fill="#555" />
        <circle cx="67.500" cy="69" r="52.500" fill="url(#green)" stroke="#e8f4da" strokeWidth="1.500" />
        <path d="M90 41c8 4 13 10 15 15h13M90 112c8-4 13-12 15-26h13" fill="none" stroke="#9ccc66" opacity=".8" />
        <path d="M98 65l4-3v4l3 1 3-2c1 3 0 5-1 6l4 4c2 0 4 1 3 5l-3-2-3 1v3c-3-1-4-3-3-5l-4-5c-2 0-4-3-3-7z" fill="#2c5c0a" />
      </Gadget>

      <Window>
        <BrowserChrome />
        <Page>
          <Sidebar>
            <Brand><BrandMark /><BrandName>Fullerton<br />India</BrandName></Brand>
            {menu.map(([icon, label]) => (
              <MenuItem key={label} $active={label === "My Documents"}>
                <LineIcon name={icon} s={17} />
                <span>{label}</span>
                {label === "Service Requests" && <SubArrow />}
              </MenuItem>
            ))}
          </Sidebar>
          <Main>
            <SiteHeader />
            <Content>
              <Documents />
              <Summary>
                <SummaryTop>
                  <Lan>LAN: 002325100003390<Caret $c="#858a8e" /></Lan>
                  <Gauge><GaugeDisc /></Gauge>
                </SummaryTop>
                <Amount $top={83} $size={13} $ls={-0.22}>PRINCIPAL OUTSTANDING</Amount>
                <Amount $top={-1} $size={18} $ls={-0.2}><b>₹</b> 0</Amount>
                <Amount $top={12} $size={12.5} $ls={-0.42}>PRINCIPAL PAID: &nbsp;<b>₹</b> 637594</Amount>
                <Legend>Principal :<Swatch $gap={27} $c="#6f5c50" />Outstanding<Swatch $gap={35} $c="#693617" />Paid</Legend>
              </Summary>
            </Content>
          </Main>
          <Scrollbar><ScrollUp /></Scrollbar>
        </Page>
        <Dialog>
          This request has already been placed. Kindly check the status on the service request history<br />page.
          <DialogClose>
            <svg width="15" height="15" viewBox="0 0 15 15"><path d="M3 3l9 9M12 3l-9 9" stroke="#fff" strokeWidth="4.400" strokeLinecap="round" /></svg>
          </DialogClose>
        </Dialog>
      </Window>

      <Taskbar>
        <TaskButton $w={48}>{taskIcons.start}</TaskButton>
        <TaskButton $w={48}>{taskIcons.search}</TaskButton>
        <TaskButton $w={48}>{taskIcons.cortana}</TaskButton>
        <TaskButton $gap={2}>{taskIcons.edge}</TaskButton>
        <TaskButton $open>{taskIcons.folder}</TaskButton>
        <TaskButton>{taskIcons.mail}</TaskButton>
        <TaskButton>{taskIcons.office("#2b579a", "W")}</TaskButton>
        <TaskButton $open>{taskIcons.office("#217346", "X")}</TaskButton>
        <TaskButton $open $active><Chrome s={22} /></TaskButton>
        <TaskButton $open>{taskIcons.note}</TaskButton>
        <TaskButton>{taskIcons.lock}</TaskButton>
        <TaskButton $open>{taskIcons.remote}</TaskButton>
        <Tray>
          <svg width="64" height="18" viewBox="0 0 64 18" fill="none" stroke="#fff" strokeWidth="1.200">
            <path d="M1 11.500L7 5.500l6 6" />
            <path d="M28 4.500h10v8H26V9M32 12.500V16M28 16.500h8M23.500 3.500h4v4h-4zM25.500 7.500V14" />
            <path d="M47.500 7h3l4-3.500v11l-4-3.500h-3zM56.500 6.500c1.500 1.500 1.500 3.500 0 5M58.700 4.500c2.500 2.500 2.500 6.500 0 9M61 3c3 3.500 3 8.500 0 12" />
          </svg>
          <Lang>ENG</Lang>
          <Clock>04:04 PM<br />23-02-2021</Clock>
          <svg width="26" height="26" viewBox="0 0 26 26">
            <path d="M0 4h16v12H8l-4 3v-3H0z" fill="#fff" /><path d="M3 7.500h10M3 10h10M3 12.500h7" stroke="#1a2942" />
            <circle cx="16" cy="19" r="7.500" fill="#2c3440" stroke="#8b929b" />
            <text x="16" y="23" fontSize="11.500" fontWeight="600" fill="#fff" textAnchor="middle" fontFamily="Open Sans">7</text>
          </svg>
        </Tray>
        <ShowDesktop />
      </Taskbar>
    </Desktop>
  );
}
